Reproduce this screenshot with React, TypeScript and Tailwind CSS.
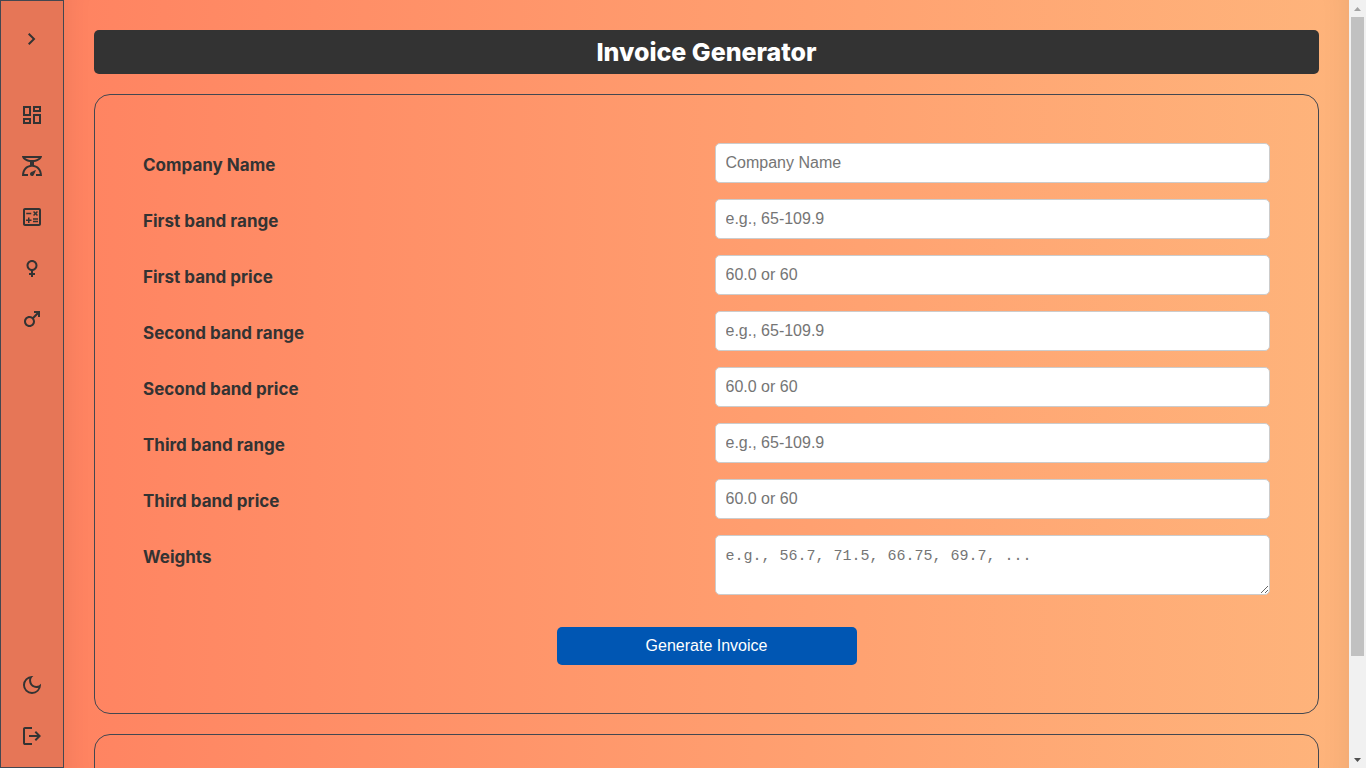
import {
  MdOutlineDashboard,
  MdOutlineScale,
  MdOutlineCalculate,
  MdFemale,
  MdMale,
  MdOutlineDarkMode,
} from "react-icons/md";
import type { ReactNode } from "react";

function ChevronIcon() {
  return (
    <svg viewBox="0 0 24 24" className="size-6" fill="currentColor" aria-hidden="true">
      <path d="M12.6 12L8 7.4L9.4 6l6 6l-6 6L8 16.6z" />
    </svg>
  );
}

function LogoutIcon() {
  return (
    <svg viewBox="0 0 24 24" className="size-6" fill="currentColor" aria-hidden="true">
      <path d="M5 21q-.825 0-1.412-.587T3 19V5q0-.825.588-1.412T5 3h7v2H5v14h7v2zm11-4l-1.375-1.45l2.55-2.55H9v-2h8.175l-2.55-2.55L16 7l5 5z" />
    </svg>
  );
}

function NavLink({ label, children }: { label: string; children: ReactNode }) {
  return (
    <a href="#" aria-label={label} className="flex size-6 items-center justify-center">
      {children}
    </a>
  );
}

function Sidebar() {
  return (
    <nav className="flex w-16 shrink-0 flex-col items-center border border-[#434750] bg-[#e67657] pt-[26px] pb-[19px] text-[#333]">
      <button type="button" aria-label="Expand menu" className="mb-[52px] size-6">
        <ChevronIcon />
      </button>
      <div className="flex flex-col gap-[27px]">
        <NavLink label="Dashboard"><MdOutlineDashboard className="size-6" /></NavLink>
        <NavLink label="Weights"><MdOutlineScale className="size-6" /></NavLink>
        <NavLink label="Calculator"><MdOutlineCalculate className="size-6" /></NavLink>
        <NavLink label="Female"><MdFemale className="size-6" /></NavLink>
        <NavLink label="Male"><MdMale className="size-6" /></NavLink>
      </div>
      <div className="mt-auto flex flex-col gap-[27px]">
        <button type="button" aria-label="Dark mode" className="size-6">
          <MdOutlineDarkMode className="size-6" />
        </button>
        <NavLink label="Log out"><LogoutIcon /></NavLink>
      </div>
    </nav>
  );
}

const fields = [
  { id: "company", label: "Company Name", placeholder: "Company Name" },
  { id: "range1", label: "First band range", placeholder: "e.g., 65-109.9" },
  { id: "price1", label: "First band price", placeholder: "60.0 or 60" },
  { id: "range2", label: "Second band range", placeholder: "e.g., 65-109.9" },
  { id: "price2", label: "Second band price", placeholder: "60.0 or 60" },
  { id: "range3", label: "Third band range", placeholder: "e.g., 65-109.9" },
  { id: "price3", label: "Third band price", placeholder: "60.0 or 60" },
];

const labelClass = "pt-[10px] font-['Inter',sans-serif] text-[17px] leading-6 font-bold text-[#333]";

function InvoiceForm() {
  return (
    <form className="rounded-[16px] border border-[#434750] p-12" onSubmit={(e) => e.preventDefault()}>
      <div className="grid grid-cols-2 gap-x-4 gap-y-4">
        {fields.map((f) => (
          <div key={f.id} className="contents">
            <label htmlFor={f.id} className={labelClass}>{f.label}</label>
            <input
              id={f.id}
              type="text"
              placeholder={f.placeholder}
              className="h-10 w-full rounded-[5px] border border-[#ccc] bg-white px-[10px] text-base text-[#333] placeholder:text-[#757575]"
            />
          </div>
        ))}
        <label htmlFor="weights" className={labelClass}>Weights</label>
        <textarea
          id="weights"
          placeholder="e.g., 56.7, 71.5, 66.75, 69.7, ..."
          className="block h-15 w-full resize rounded-[5px] border border-[#ccc] bg-white px-[10px] py-[10px] font-['Liberation_Mono',monospace] text-[15px] text-[#333] placeholder:text-[#757575]"
        />
      </div>
      <button
        type="submit"
        className="mx-auto mt-8 block h-[38px] w-[300px] rounded-[5px] bg-[#0056b3] text-base text-white"
      >
        Generate Invoice
      </button>
    </form>
  );
}

function ScrollTrack() {
  return (
    <div aria-hidden="true" className="flex w-[17px] shrink-0 flex-col items-center bg-[#f1f1f1]">
      <svg viewBox="0 0 17 17" className="size-[17px]">
        <path d="M5 11h7L8.500 7z" fill="#a3a3a3" />
      </svg>
      <div className="w-[13px] grow-[639] bg-[#c1c1c1]" />
      <div className="grow-[95]" />
      <svg viewBox="0 0 17 17" className="size-[17px]">
        <path d="M5 7h7l-3.500 4z" fill="#505050" />
      </svg>
    </div>
  );
}

export default function App() {
  return (
    <div className="flex h-screen overflow-hidden font-['Liberation_Sans',sans-serif]">
      <Sidebar />
      <main className="min-w-0 flex-1 overflow-y-auto bg-linear-to-r from-[#ff8361] to-[#feb47b] [scrollbar-width:none] shadow-[inset_30px_0_30px_-30px_rgba(0,0,0,0.08),inset_-30px_0_30px_-30px_rgba(0,0,0,0.08)]">
        <div className="flex flex-col gap-5 p-[30px]">
          <h1 className="rounded-[5px] bg-[#333] text-center font-['Inter',sans-serif] text-[25px] leading-[44px] font-extrabold text-white">
            Invoice Generator
          </h1>
          <InvoiceForm />
          <section aria-label="Invoice" className="h-80 rounded-[16px] border border-[#434750]" />
        </div>
      </main>
      <ScrollTrack />
    </div>
  );
}
